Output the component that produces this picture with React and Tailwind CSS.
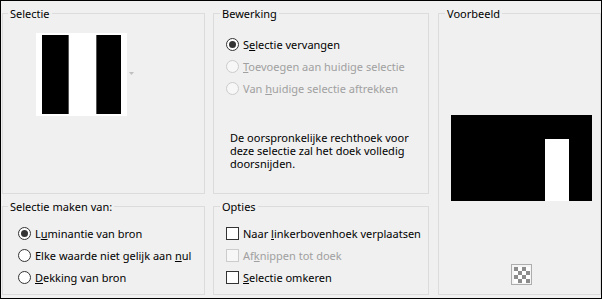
const font = { fontFamily: '"Noto Sans", "Open Sans", sans-serif' };

const GroupBox = ({ title, titleLeft = 'left-[6px]', className = '', children }) => (
    <div className={`relative border border-[#dcdcdc] ${className}`}>
        <span className={`absolute -top-[7px] ${titleLeft} px-[2px] bg-[#f0f0f0] text-[11px] leading-[13px] text-black`}>
            {title}
        </span>
        {children}
    </div>
);

const Radio = ({ checked, disabled, children }) => (
    <div className="flex items-center h-[22px] gap-[4px]">
        <span
            className={`flex items-center justify-center w-[13px] h-[13px] rounded-full border ${
                disabled ? 'border-[#cccccc] bg-[#f7f7f7]' : 'border-[#333333] bg-white'
            }`}
        >
            {checked && <span className="w-[7px] h-[7px] rounded-full bg-[#333333]" />}
        </span>
        <span className={`text-[11px] leading-[13px] ${disabled ? 'text-[#a0a0a0]' : 'text-black'}`}>{children}</span>
    </div>
);

const Check = ({ disabled, children }) => (
    <div className="flex items-center h-[22px] gap-[4px]">
        <span
            className={`w-[13px] h-[13px] border ${
                disabled ? 'border-[#cccccc] bg-[#f7f7f7]' : 'border-[#333333] bg-white'
            }`}
        />
        <span className={`text-[11px] leading-[13px] ${disabled ? 'text-[#a0a0a0]' : 'text-black'}`}>{children}</span>
    </div>
);

const CheckerIcon = () => (
    <svg width="21" height="21" viewBox="0 0 21 21">
        <rect x="0.5" y="0.5" width="20" height="20" fill="#f4f4f4" stroke="#adadad" />
        {[0, 1, 2, 3].map((r) =>
            [0, 1, 2, 3].map((c) => (
                <rect
                    key={`${r}-${c}`}
                    x={3 + c * 4}
                    y={3 + r * 4}
                    width="4"
                    height="4"
                    fill={(r + c) % 2 === 0 ? '#8c8c8c' : '#ffffff'}
                />
            ))
        )}
    </svg>
);

export default function App() {
    return (
        <div className="w-[602px] h-[299px] border border-black bg-[#f0f0f0] pl-[1px] pt-[12px] flex" style={font}>
            {/* left column */}
            <div className="flex flex-col w-[203px] gap-[12px]">
                <GroupBox title="Selectie" titleLeft="left-[5px]" className="h-[181px]">
                    <div className="flex items-center gap-[2px] pl-[33px] pt-[19px]">
                        <div className="bg-white px-[6px] py-[2px]">
                            <div className="flex w-[79px] h-[79px]">
                                <div className="w-[26px] bg-black" />
                                <div className="w-[29px] bg-white border-x border-[#555]" />
                                <div className="w-[24px] bg-black" />
                            </div>
                        </div>
                        <svg width="5" height="3" viewBox="0 0 5 3" className="mt-[-2px]">
                            <polygon points="0,0 5,0 2.5,3" fill="#c0c0c0" />
                        </svg>
                    </div>
                </GroupBox>
                <GroupBox title="Selectie maken van:" titleLeft="left-[5px]" className="h-[89px] pl-[15px] pt-[15px]">
                    <Radio checked>
                        L<u>u</u>minantie van bron
                    </Radio>
                    <Radio>
                        Elke waarde niet gelijk aan <u>n</u>ul
                    </Radio>
                    <Radio>
                        <u>D</u>ekking van bron
                    </Radio>
                </GroupBox>
            </div>

            {/* middle column */}
            <div className="flex flex-col w-[216px] ml-[8px] gap-[12px]">
                <GroupBox title="Bewerking" className="h-[181px] pl-[12px] pt-[19px]">
                    <Radio checked>
                        S<u>e</u>lectie vervangen
                    </Radio>
                    <Radio disabled>
                        <u>T</u>oevoegen aan huidige selectie
                    </Radio>
                    <Radio disabled>
                        Van <u>h</u>uidige selectie aftrekken
                    </Radio>
                    <div className="mt-[32px] pl-[4px] text-[11px] leading-[13px] text-black">
                        <div>De oorspronkelijke rechthoek voor</div>
                        <div>deze selectie zal het doek volledig</div>
                        <div>doorsnijden.</div>
                    </div>
                </GroupBox>
                <GroupBox title="Opties" className="h-[89px] pl-[12px] pt-[15px]">
                    <Check>
                        Naar <u>l</u>inkerbovenhoek verplaatsen
                    </Check>
                    <Check disabled>
                        Af<u>k</u>nippen tot doek
                    </Check>
                    <Check>
                        <u>S</u>electie omkeren
                    </Check>
                </GroupBox>
            </div>

            {/* right column */}
            <div className="w-[163px] ml-[9px]">
                <GroupBox title="Voorbeeld" className="h-[282px] flex flex-col">
                    <div className="ml-[12px] mt-[101px] w-[141px] h-[86px] bg-black pl-[94px] pt-[24px]">
                        <div className="w-[24px] h-full bg-white" />
                    </div>
                    <div className="ml-[72px] mt-[63px] w-[21px] h-[21px]">
                        <CheckerIcon />
                    </div>
                </GroupBox>
            </div>
        </div>
    );
}
